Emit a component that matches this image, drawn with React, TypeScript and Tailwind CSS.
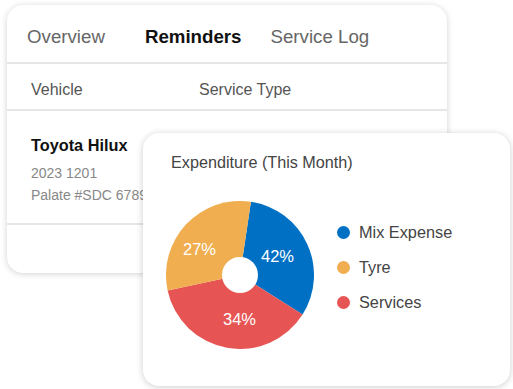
const slices = [
  { from: 8.5, to: 122.3, color: "#0070c4" },
  { from: 122.3, to: 258, color: "#e65454" },
  { from: 258, to: 368.5, color: "#f0ae50" },
];

function point(cx: number, cy: number, r: number, deg: number) {
  const a = ((deg - 90) * Math.PI) / 180;
  return [cx + r * Math.cos(a), cy + r * Math.sin(a)];
}

function slicePath(from: number, to: number) {
  const [x1, y1] = point(74, 74, 74, from);
  const [x2, y2] = point(74, 74, 74, to);
  const large = to - from > 180 ? 1 : 0;
  return `M74 74 L${x1} ${y1} A74 74 0 ${large} 1 ${x2} ${y2} Z`;
}

const legend = [
  { label: "Mix Expense", color: "bg-[#0070c4]" },
  { label: "Tyre", color: "bg-[#f0ae50]" },
  { label: "Services", color: "bg-[#e65454]" },
];

export default function App() {
  return (
    <div className="relative w-[513px] h-[389px] bg-white overflow-hidden font-['Liberation_Sans',Arial,sans-serif]">
      <div className="ml-[7px] mt-[5px] w-[440px] h-[268px] rounded-2xl bg-white shadow-[0_1px_6px_rgba(0,0,0,0.18)] flex flex-col">
        <div className="h-[59px] flex items-center pt-[8px] pl-[20px] text-[18.7px] border-b-2 border-[#e6e6e6]">
          <span className="text-[#666]">Overview</span>
          <span className="ml-[40px] font-bold text-[#111]">Reminders</span>
          <span className="ml-[29px] text-[#666]">Service Log</span>
        </div>
        <div className="h-[47px] flex items-center pt-[6px] pl-[24px] text-[16px] text-[#555] border-b-2 border-[#e6e6e6]">
          <span className="w-[168px]">Vehicle</span>
          <span>Service Type</span>
        </div>
        <div className="h-[114px] pl-[24px] pt-[24px] border-b-2 border-[#e6e6e6]">
          <div className="text-[16.3px] font-bold text-[#111] leading-[20px]">Toyota Hilux</div>
          <div className="mt-[8px] text-[14px] text-[#888] leading-[20px]">2023 1201</div>
          <div className="mt-[2px] text-[14px] text-[#888] leading-[20px]">Palate #SDC 6789</div>
        </div>
      </div>

      <div className="absolute left-[143px] top-[133px] w-[367px] h-[253px] rounded-2xl bg-white shadow-[0_1px_7px_rgba(0,0,0,0.2)] pl-[28px] pt-[20px]">
        <div className="text-[16.2px] text-[#444] leading-[18px]">Expenditure (This Month)</div>
        <div className="flex items-start mt-[30px] -ml-[5px]">
          <div className="relative w-[148px] h-[148px]">
            <svg width="148" height="148" viewBox="0 0 148 148">
              {slices.map((s) => (
                <path key={s.color} d={slicePath(s.from, s.to)} fill={s.color} />
              ))}
              <circle cx="74" cy="74" r="18" fill="#fff" />
            </svg>
            <span className="absolute left-[95px] top-[46px] text-[16.5px] leading-[19px] text-white">42%</span>
            <span className="absolute left-[17px] top-[39px] text-[16.5px] leading-[19px] text-white">27%</span>
            <span className="absolute left-[57px] top-[109px] text-[16.5px] leading-[19px] text-white">34%</span>
          </div>
          <div className="ml-[23px] mt-[22px] flex flex-col gap-[16px]">
            {legend.map((l) => (
              <div key={l.label} className="flex items-center h-[19px]">
                <span className={`w-[13px] h-[13px] rounded-full ${l.color}`} />
                <span className="ml-[9px] text-[16.3px] text-[#444]">{l.label}</span>
              </div>
            ))}
          </div>
        </div>
      </div>
    </div>
  );
}
